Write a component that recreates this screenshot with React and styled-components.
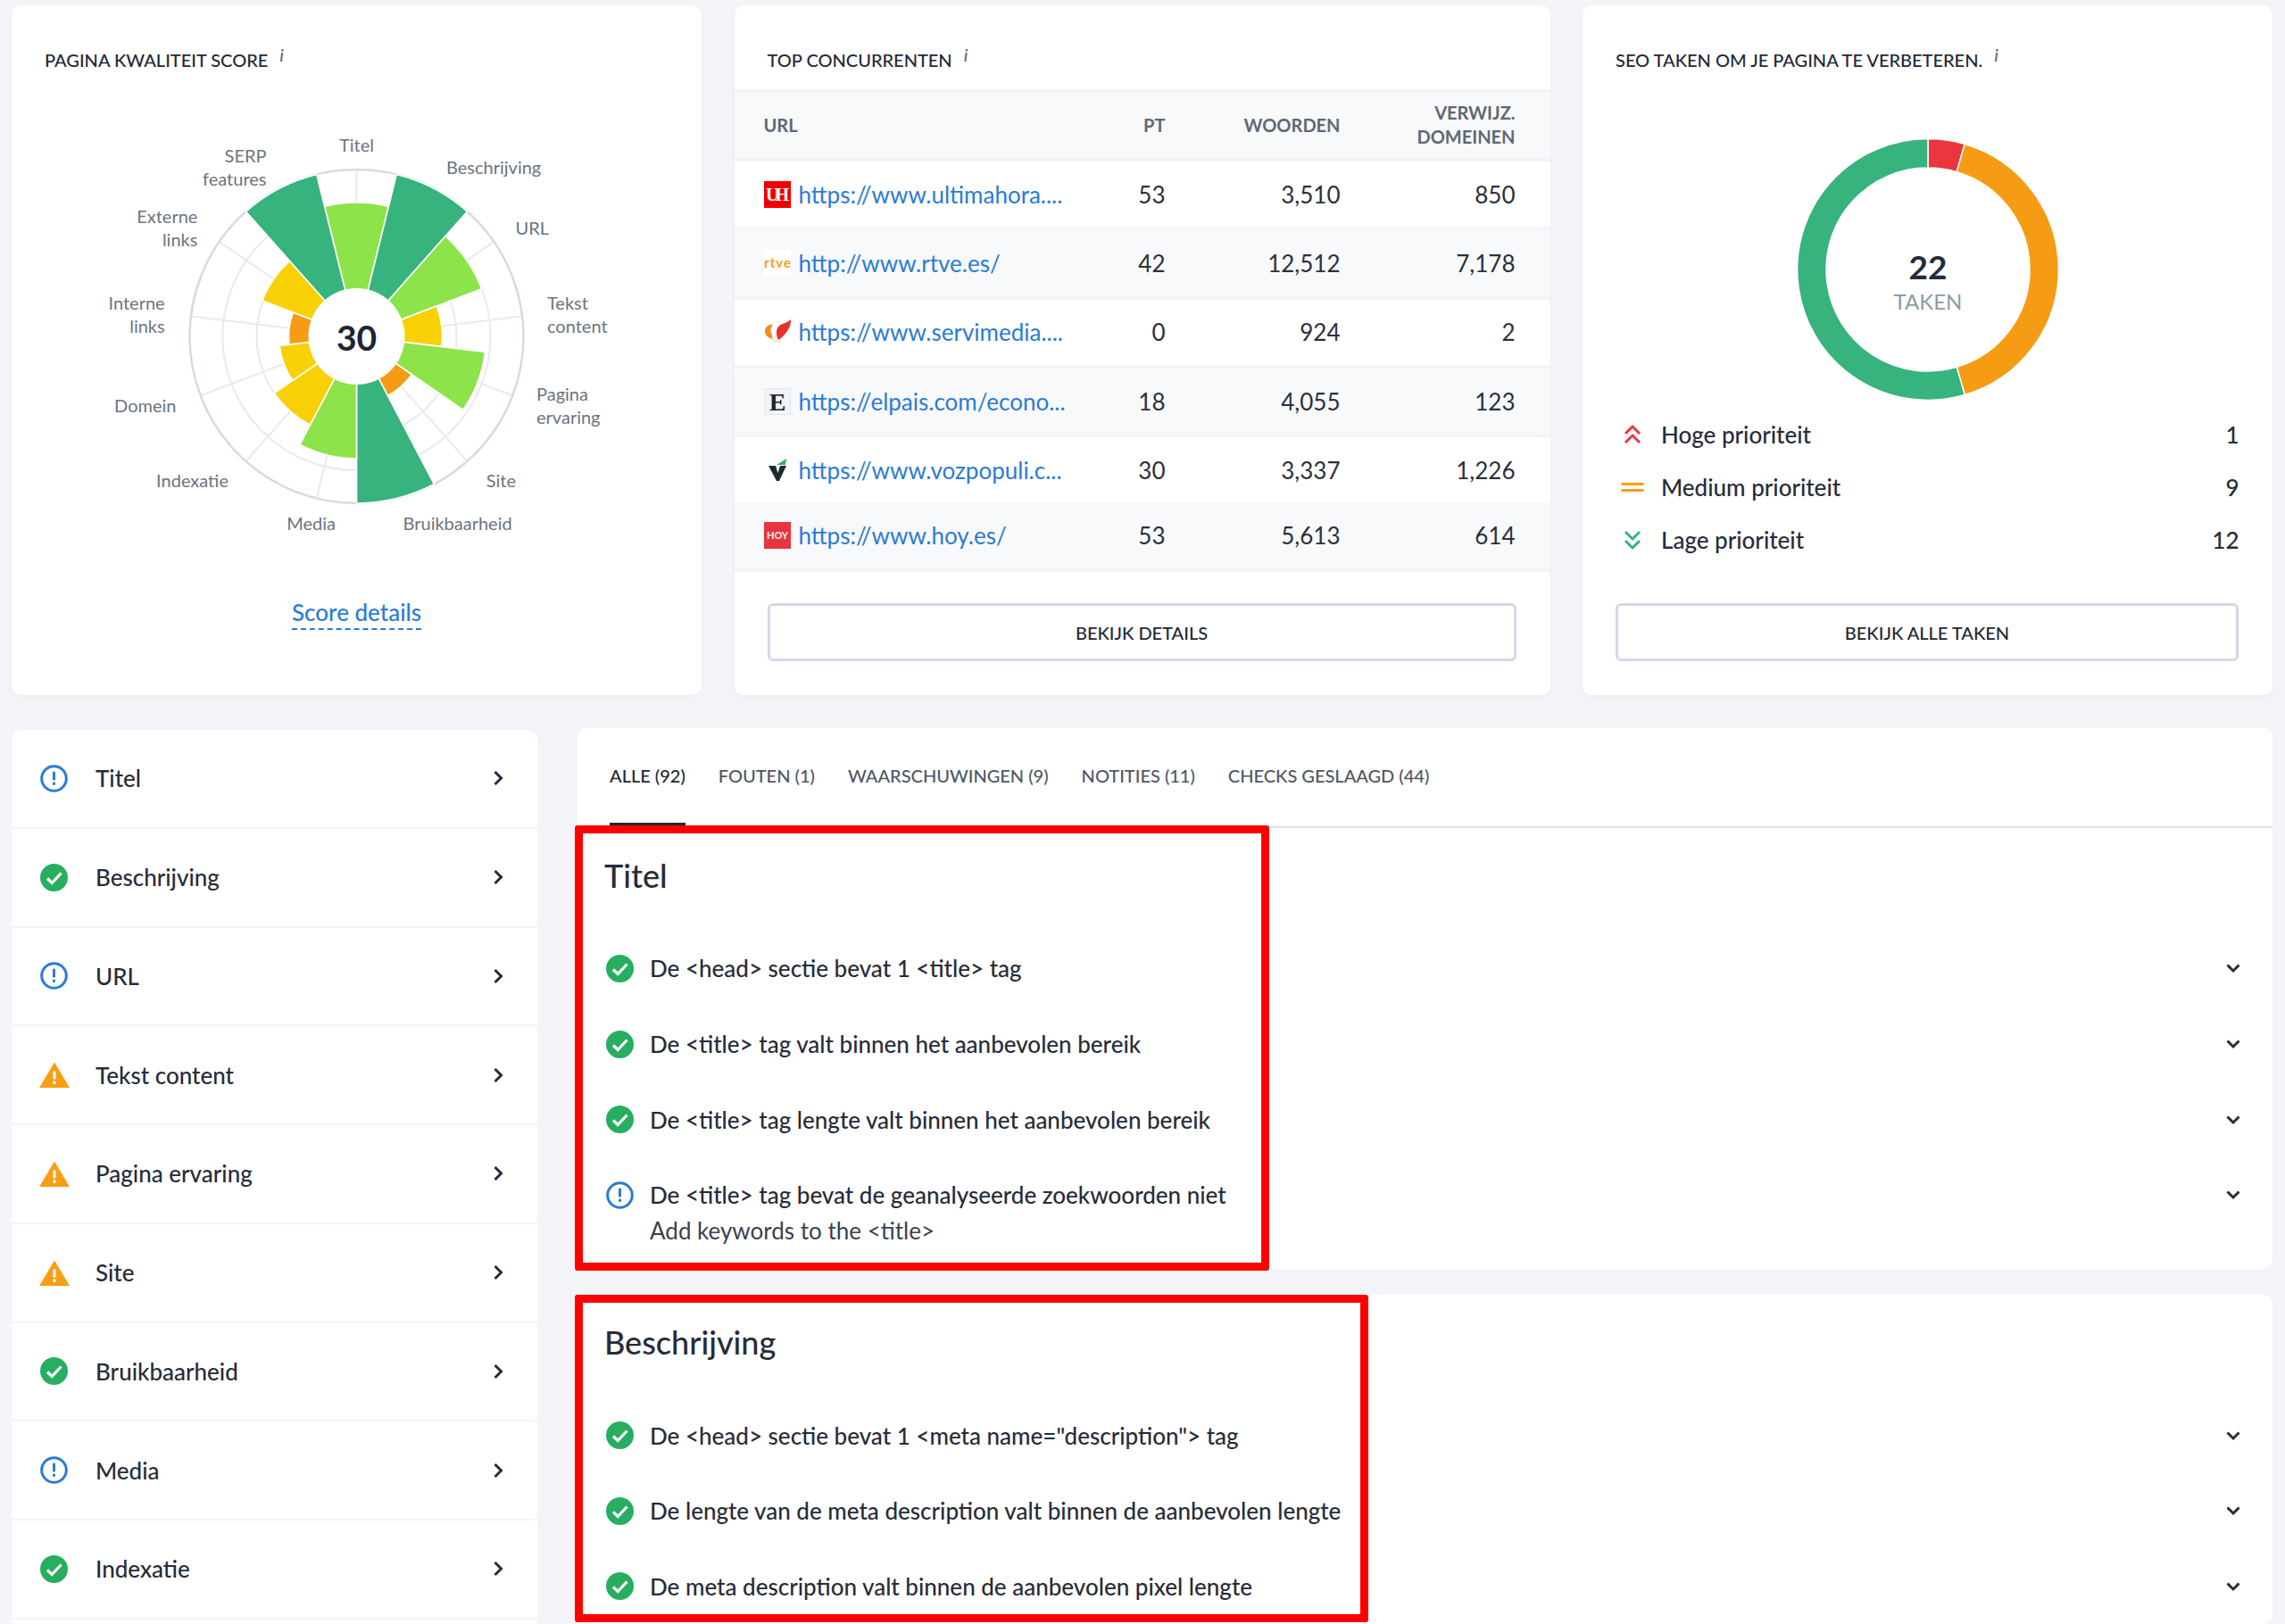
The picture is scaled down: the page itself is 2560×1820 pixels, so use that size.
import React from "react";
import styled, { createGlobalStyle } from "styled-components";

const GREEN = "#37b37e";
const LIME = "#8ce34a";
const YELLOW = "#f7d106";
const ORANGE = "#f69c14";
const RED = "#e9363f";
const BLUE = "#2b7bd6";
const OK = "#27ae60";

const competitors = [
  { icon: "uh", url: "https://www.ultimahora....", pt: "53", words: "3,510", refs: "850" },
  { icon: "rtve", url: "http://www.rtve.es/", pt: "42", words: "12,512", refs: "7,178" },
  { icon: "servi", url: "https://www.servimedia....", pt: "0", words: "924", refs: "2" },
  { icon: "elpais", url: "https://elpais.com/econo...", pt: "18", words: "4,055", refs: "123" },
  { icon: "voz", url: "https://www.vozpopuli.c...", pt: "30", words: "3,337", refs: "1,226" },
  { icon: "hoy", url: "https://www.hoy.es/", pt: "53", words: "5,613", refs: "614" },
];

const categories = [
  ["info", "Titel"],
  ["ok", "Beschrijving"],
  ["info", "URL"],
  ["warn", "Tekst content"],
  ["warn", "Pagina ervaring"],
  ["warn", "Site"],
  ["ok", "Bruikbaarheid"],
  ["info", "Media"],
  ["ok", "Indexatie"],
  ["ok", "Domein"],
];

const tabs = ["ALLE (92)", "FOUTEN (1)", "WAARSCHUWINGEN (9)", "NOTITIES (11)", "CHECKS GESLAAGD (44)"];

// polar chart values: outer radius + colour, clockwise from the top
const sectors = [
  [150, LIME],
  [187, GREEN],
  [150, LIME],
  [96, YELLOW],
  [145, LIME],
  [75, ORANGE],
  [187, GREEN],
  [137, LIME],
  [112, YELLOW],
  [87, YELLOW],
  [76, ORANGE],
  [113, YELLOW],
  [187, GREEN],
];

const CX = 386.5;
const CY = 241;

// x and y are taken from the card corner, y from the top of the svg
const labels = [
  { x: 386.5, y: 26, anchor: "middle", lines: ["Titel"] },
  { x: 487, y: 51, anchor: "start", lines: ["Beschrijving"] },
  { x: 564.5, y: 119, anchor: "start", lines: ["URL"] },
  { x: 600, y: 203, anchor: "start", lines: ["Tekst", "content"] },
  { x: 588, y: 305, anchor: "start", lines: ["Pagina", "ervaring"] },
  { x: 565, y: 402, anchor: "end", lines: ["Site"] },
  { x: 438.5, y: 450, anchor: "start", lines: ["Bruikbaarheid"] },
  { x: 363, y: 450, anchor: "end", lines: ["Media"] },
  { x: 243, y: 402, anchor: "end", lines: ["Indexatie"] },
  { x: 184.5, y: 318, anchor: "end", lines: ["Domein"] },
  { x: 171.7, y: 203, anchor: "end", lines: ["Interne", "links"] },
  { x: 208.4, y: 106, anchor: "end", lines: ["Externe", "links"] },
  { x: 285.5, y: 38, anchor: "end", lines: ["SERP", "features"] },
];

function point(r, deg, cx = CX, cy = CY) {
  const a = ((deg - 90) * Math.PI) / 180;
  return [cx + r * Math.cos(a), cy + r * Math.sin(a)];
}

function sectorPath(r, from, to) {
  const [x1, y1] = point(r, from);
  const [x2, y2] = point(r, to);
  return `M${CX} ${CY} L${x1} ${y1} A${r} ${r} 0 0 1 ${x2} ${y2} Z`;
}

function ringPath(from, to) {
  const c = 150;
  const [x1, y1] = point(146.4, from, c, c);
  const [x2, y2] = point(146.4, to, c, c);
  const [x3, y3] = point(114, to, c, c);
  const [x4, y4] = point(114, from, c, c);
  const big = to - from > 180 ? 1 : 0;
  return `M${x1} ${y1} A146.4 146.4 0 ${big} 1 ${x2} ${y2} L${x3} ${y3} A114 114 0 ${big} 0 ${x4} ${y4} Z`;
}

function PolarChart() {
  const step = 360 / sectors.length;
  return (
    <ChartSvg viewBox="0 0 773 500">
      <circle cx={CX} cy={CY} r="112" fill="none" stroke="#e8eaf0" strokeWidth="2" />
      <circle cx={CX} cy={CY} r="150" fill="none" stroke="#e8eaf0" strokeWidth="2" />
      {sectors.map((_, i) => {
        const [x, y] = point(186, i * step);
        return <line key={i} x1={CX} y1={CY} x2={x} y2={y} stroke="#e8eaf0" strokeWidth="2" />;
      })}
      <circle cx={CX} cy={CY} r="187" fill="none" stroke="#d6dae6" strokeWidth="2.5" />
      {sectors.map(([r, color], i) => (
        <path
          key={i}
          d={sectorPath(r, i * step - step / 2, i * step + step / 2)}
          fill={color}
          stroke="#fff"
          strokeWidth="1.6"
        />
      ))}
      <circle cx={CX} cy={CY} r="54" fill="#fff" />
      <ChartScore x={CX} y={CY + 1}>
        30
      </ChartScore>
      {labels.map((l) => (
        <ChartLabel key={l.lines[0]} x={l.x} y={l.y} textAnchor={l.anchor}>
          {l.lines.map((line, i) => (
            <tspan key={line} x={l.x} dy={i ? 26 : 0}>
              {line}
            </tspan>
          ))}
        </ChartLabel>
      ))}
    </ChartSvg>
  );
}

function Donut() {
  const seg = 360 / 22;
  return (
    <DonutSvg viewBox="0 0 300 300">
      <path d={ringPath(0, seg)} fill={RED} stroke="#fff" strokeWidth="1.5" />
      <path d={ringPath(seg, seg * 10)} fill={ORANGE} stroke="#fff" strokeWidth="1.5" />
      <path d={ringPath(seg * 10, 360)} fill={GREEN} stroke="#fff" strokeWidth="1.5" />
      <DonutCount x="150" y="146">
        22
      </DonutCount>
      <DonutCaption x="150" y="185">
        TAKEN
      </DonutCaption>
    </DonutSvg>
  );
}

function StatusIcon({ type }) {
  if (type === "ok") {
    return (
      <IconSvg viewBox="0 0 31 31">
        <circle cx="15.5" cy="15.5" r="15.5" fill={OK} />
        <path d="M8 16.5 L13.2 21.5 L23.5 10.5" fill="none" stroke="#fff" strokeWidth="3.2" />
      </IconSvg>
    );
  }
  if (type === "warn") {
    return (
      <IconSvg viewBox="0 0 34 31" $wide>
        <path d="M17 1.5 L34 30 H0 Z" fill="#f99e14" />
        <rect x="15.4" y="11.5" width="3.2" height="9" rx="1" fill="#fff" />
        <rect x="15.4" y="22.5" width="3.2" height="3.4" rx="1" fill="#fff" />
      </IconSvg>
    );
  }
  return (
    <IconSvg viewBox="0 0 31 31">
      <circle cx="15.5" cy="15.5" r="13.8" fill="none" stroke={BLUE} strokeWidth="3" />
      <rect x="14" y="7.5" width="3" height="10" rx="1.2" fill={BLUE} />
      <rect x="14" y="19.6" width="3" height="3.4" rx="1.2" fill={BLUE} />
    </IconSvg>
  );
}

function PriorityIcon({ level }) {
  if (level === "high") {
    return (
      <PrioritySvg viewBox="0 0 26 24" stroke={RED}>
        <path d="M5 11 L13 3 L21 11" />
        <path d="M5 21 L13 13 L21 21" />
      </PrioritySvg>
    );
  }
  if (level === "low") {
    return (
      <PrioritySvg viewBox="0 0 26 24" stroke={GREEN}>
        <path d="M5 3 L13 11 L21 3" />
        <path d="M5 13 L13 21 L21 13" />
      </PrioritySvg>
    );
  }
  return (
    <PrioritySvg viewBox="0 0 26 24" stroke={ORANGE}>
      <path d="M0.5 8.5 H25.5" />
      <path d="M0.5 15.5 H25.5" />
    </PrioritySvg>
  );
}

function Favicon({ name }) {
  if (name === "uh") {
    return (
      <FavSvg viewBox="0 0 30 30">
        <rect width="30" height="30" fill="#f00000" />
        <FavText x="15" y="22" fill="#fff" fontSize="20" fontFamily="Liberation Serif" fontWeight="700" textLength="26">
          UH
        </FavText>
      </FavSvg>
    );
  }
  if (name === "rtve") {
    return (
      <FavSvg viewBox="0 0 30 30">
        <rect width="30" height="30" fill="#fff" />
        <FavText x="15" y="20" fill="#f69c14" fontSize="15" fontWeight="700" textLength="30">
          rtve
        </FavText>
      </FavSvg>
    );
  }
  if (name === "servi") {
    return (
      <FavSvg viewBox="0 0 30 30">
        <path d="M1 14 C1 9 6 6 10 7 C7 10 7 14 8.5 17 L10 23 C5 22 1 19 1 14Z" fill="#f58a1f" />
        <path d="M30 1 C31 8 25 18 16 24 C13 18 13 12 17 8 C21 5 26 5 30 1Z" fill="#e8312f" />
        <path d="M9 21 C11 26 15 27 19 24" fill="none" stroke="#fbd7b0" strokeWidth="1.5" />
      </FavSvg>
    );
  }
  if (name === "elpais") {
    return (
      <FavSvg viewBox="0 0 30 30">
        <rect x="0.5" y="0.5" width="29" height="29" fill="#f3f4f6" stroke="#e4e6ea" />
        <FavText x="15" y="25" fill="#20252b" fontSize="28" fontFamily="Liberation Serif" fontWeight="700">
          E
        </FavText>
      </FavSvg>
    );
  }
  if (name === "voz") {
    return (
      <FavSvg viewBox="0 0 30 30">
        <path d="M5 10 H13 L15.5 18 L18 10 H25 L17 27 H14 Z" fill="#1f2a2e" />
        <path d="M14 9 L25 2 L24 9 Z" fill="#2fb457" />
      </FavSvg>
    );
  }
  return (
    <FavSvg viewBox="0 0 30 30">
      <rect width="30" height="30" fill="#e7343f" />
      <FavText x="15" y="19" fill="#fbe3e3" fontSize="11" fontWeight="900">
        HOY
      </FavText>
    </FavSvg>
  );
}

function Chevron({ down }) {
  return (
    <ChevronSvg viewBox="0 0 16 16">
      <path d={down ? "M1.5 4.5 L8 11 L14.5 4.5" : "M4.5 1 L11.5 8 L4.5 15"} />
    </ChevronSvg>
  );
}

function CheckRow({ type, text, hint }) {
  return (
    <Row>
      <StatusIcon type={type} />
      <RowBody>
        <RowText>{text}</RowText>
        {hint && <RowHint>{hint}</RowHint>}
      </RowBody>
      <Chevron down />
    </Row>
  );
}

export default function App() {
  return (
    <>
      <GlobalStyle />
      <Page>
        <TopRow>
          <Card>
            <CardTitle>
              PAGINA KWALITEIT SCORE<Info>i</Info>
            </CardTitle>
            <PolarChart />
            <ScoreLink>Score details</ScoreLink>
          </Card>

          <WideCard>
            <CardTitle $flush>
              TOP CONCURRENTEN<Info>i</Info>
            </CardTitle>
            <TableHead>
              <div>URL</div>
              <Num>PT</Num>
              <Num>WOORDEN</Num>
              <Num>
                VERWIJZ.
                <br />
                DOMEINEN
              </Num>
            </TableHead>
            {competitors.map((c, i) => (
              <TableRow key={c.url} $alt={i % 2 === 1}>
                <UrlCell>
                  <Favicon name={c.icon} />
                  <UrlLink>{c.url}</UrlLink>
                </UrlCell>
                <Num>{c.pt}</Num>
                <Num>{c.words}</Num>
                <Num>{c.refs}</Num>
              </TableRow>
            ))}
            <OutlineButton>BEKIJK DETAILS</OutlineButton>
          </WideCard>

          <Card>
            <CardTitle>
              SEO TAKEN OM JE PAGINA TE VERBETEREN.<Info>i</Info>
            </CardTitle>
            <Donut />
            <Legend>
              <LegendRow>
                <PriorityIcon level="high" />
                <span>Hoge prioriteit</span>
                <LegendCount>1</LegendCount>
              </LegendRow>
              <LegendRow>
                <PriorityIcon level="medium" />
                <span>Medium prioriteit</span>
                <LegendCount>9</LegendCount>
              </LegendRow>
              <LegendRow>
                <PriorityIcon level="low" />
                <span>Lage prioriteit</span>
                <LegendCount>12</LegendCount>
              </LegendRow>
            </Legend>
            <OutlineButton>BEKIJK ALLE TAKEN</OutlineButton>
          </Card>
        </TopRow>

        <BottomRow>
          <Sidebar>
            {categories.map(([type, name]) => (
              <SideRow key={name}>
                <StatusIcon type={type} />
                <SideName>{name}</SideName>
                <Chevron />
              </SideRow>
            ))}
          </Sidebar>

          <Main>
            <Panel>
              <TabBar>
                {tabs.map((t, i) => (
                  <Tab key={t} $active={i === 0}>
                    {t}
                  </Tab>
                ))}
              </TabBar>
              <Section>
                <SectionTitle>Titel</SectionTitle>
                <CheckRow type="ok" text="De <head> sectie bevat 1 <title> tag" />
                <CheckRow type="ok" text="De <title> tag valt binnen het aanbevolen bereik" />
                <CheckRow type="ok" text="De <title> tag lengte valt binnen het aanbevolen bereik" />
                <CheckRow
                  type="info"
                  text="De <title> tag bevat de geanalyseerde zoekwoorden niet"
                  hint="Add keywords to the <title>"
                />
              </Section>
              <Highlight $top={109} $width={778} $height={499} />
            </Panel>

            <Panel>
              <Section>
                <SectionTitle>Beschrijving</SectionTitle>
                <CheckRow type="ok" text='De <head> sectie bevat 1 <meta name="description"> tag' />
                <CheckRow type="ok" text="De lengte van de meta description valt binnen de aanbevolen lengte" />
                <CheckRow type="ok" text="De meta description valt binnen de aanbevolen pixel lengte" />
              </Section>
              <Highlight $top={0} $width={889} $height={367} />
            </Panel>
          </Main>
        </BottomRow>
      </Page>
    </>
  );
}

const GlobalStyle = createGlobalStyle`
  html, body {
    margin: 0;
    background: #f2f4f8;
  }
  body {
    font-family: "Lato", "Liberation Sans", sans-serif;
    color: #272c3a;
  }
  * {
    box-sizing: border-box;
  }
`;

const Page = styled.div`
  height: 1820px;
  overflow: hidden;
  padding: 6px 14px 0 13px;
`;

const TopRow = styled.div`
  display: flex;
  justify-content: space-between;
  height: 773px;
`;

const Card = styled.section`
  width: 773px;
  display: flex;
  flex-direction: column;
  padding-bottom: 38px;
  background: #fff;
  border-radius: 10px;
  box-shadow: 0 1px 4px rgba(40, 50, 80, 0.04);
`;

const WideCard = styled(Card)`
  width: 914px;
`;

const CardTitle = styled.h2`
  margin: 40px 37px ${({ $flush }) => ($flush ? "18px" : "0")};
  font-size: 20px;
  line-height: 30px;
  font-weight: 500;
  color: #232836;
  white-space: nowrap;
`;

const Info = styled.i`
  margin-left: 13px;
  font-size: 20px;
  color: #5f6875;
  vertical-align: 6px;
`;

const ChartSvg = styled.svg`
  display: block;
  width: 773px;
  height: 500px;
  margin-top: 54px;
`;

const ChartLabel = styled.text`
  font-size: 20px;
  fill: #6d7480;
  dominant-baseline: central;
`;

const ChartScore = styled.text`
  font-size: 39px;
  font-weight: 700;
  fill: #1f2433;
  text-anchor: middle;
  dominant-baseline: central;
`;

const ScoreLink = styled.a`
  align-self: center;
  margin-top: 32px;
  font-size: 26px;
  line-height: 36px;
  font-weight: 500;
  color: ${BLUE};
  border-bottom: 2px dashed ${BLUE};
`;

const tableColumns = `
  display: grid;
  grid-template-columns: 1fr 76px 196px 196px;
  align-items: center;
  padding: 0 39px 0 33px;
`;

const TableHead = styled.div`
  ${tableColumns}
  height: 81px;
  font-size: 20px;
  line-height: 27px;
  font-weight: 700;
  color: #5f6875;
  background: #f8f9fb;
  border-top: 3px solid #f2f4f8;
  border-bottom: 4px solid #f2f4f8;
`;

const TableRow = styled.div`
  ${tableColumns}
  height: 77.3px;
  font-size: 26px;
  color: #2b303c;
  background: ${({ $alt }) => ($alt ? "#f8f9fb" : "#fff")};
  border-bottom: 4px solid #f2f4f8;

  &:nth-last-of-type(2) {
    height: 73.3px;
    border-bottom: 0;
  }
`;

const Num = styled.div`
  text-align: right;
`;

const UrlCell = styled.div`
  display: flex;
  align-items: center;
  gap: 9px;
`;

const UrlLink = styled.a`
  color: ${BLUE};
  white-space: nowrap;
`;

const FavSvg = styled.svg`
  flex: none;
  width: 30px;
  height: 30px;
`;

const FavText = styled.text`
  text-anchor: middle;
`;

const OutlineButton = styled.button`
  flex: none;
  height: 65px;
  margin: auto 38px 0 37px;
  background: #fff;
  border: 3px solid #d5d9e6;
  border-radius: 6px;
  font-family: inherit;
  font-size: 20px;
  font-weight: 500;
  color: #232836;
`;

const DonutSvg = styled.svg`
  display: block;
  flex: none;
  width: 300px;
  height: 300px;
  margin: 70px auto 0;
`;

const DonutCount = styled.text`
  font-size: 37px;
  font-weight: 700;
  fill: #262c3b;
  text-anchor: middle;
  dominant-baseline: central;
`;

const DonutCaption = styled.text`
  font-size: 24px;
  fill: #8c9ca3;
  text-anchor: middle;
  dominant-baseline: central;
`;

const Legend = styled.div`
  margin: 6px 37.5px 0 37px;
`;

const LegendRow = styled.div`
  display: flex;
  align-items: center;
  height: 58.75px;
  font-size: 26px;
  font-weight: 500;
  color: #272c3a;
`;

const LegendCount = styled.span`
  margin-left: auto;
`;

const PrioritySvg = styled.svg`
  flex: none;
  width: 26px;
  height: 24px;
  margin: 0 19px 0 6px;
  fill: none;
  stroke-width: 3;
`;

const BottomRow = styled.div`
  display: grid;
  grid-template-columns: 589px 1899px;
  column-gap: 45px;
  margin-top: 37px;
`;

const Sidebar = styled.nav`
  margin-top: 2px;
  background: #fff;
  border-radius: 10px 10px 0 0;
`;

const SideRow = styled.div`
  display: flex;
  align-items: center;
  height: 110.75px;
  padding: 0 36px 0 32px;
  border-bottom: 2px solid #f2f4f8;
`;

const SideName = styled.span`
  flex: 1;
  margin-left: 31px;
  font-size: 26px;
  font-weight: 500;
  color: #272c3a;
`;

const IconSvg = styled.svg`
  flex: none;
  width: ${({ $wide }) => ($wide ? "34px" : "31px")};
  height: 31px;
  margin: ${({ $wide }) => ($wide ? "0 -1.5px" : "0")};
`;

const ChevronSvg = styled.svg`
  flex: none;
  width: 16px;
  height: 16px;
  fill: none;
  stroke: #272c3a;
  stroke-width: 3;
`;

const Main = styled.main`
  display: flex;
  flex-direction: column;
  gap: 29.5px;
`;

const Panel = styled.section`
  position: relative;
  background: #fff;
  border-radius: 10px;
`;

const TabBar = styled.div`
  display: flex;
  gap: 37px;
  height: 112px;
  padding: 0 36px;
  border-bottom: 2px solid #dfe2ea;
`;

const Tab = styled.div`
  height: 110px;
  padding-top: 38px;
  font-size: 20px;
  line-height: 30px;
  font-weight: 500;
  white-space: nowrap;
  color: ${({ $active }) => ($active ? "#232836" : "#4f5766")};
  border-bottom: 4px solid ${({ $active }) => ($active ? "#232836" : "transparent")};
`;

const Section = styled.div`
  padding: 31px 36px 0 30px;
`;

const SectionTitle = styled.h3`
  margin: 0 0 40px;
  font-size: 36px;
  line-height: 44px;
  font-weight: 500;
  color: #272c3a;
`;

const Row = styled.div`
  display: flex;
  align-items: flex-start;
  padding: 22.35px 0 22.35px 2px;

  & > svg:first-child {
    margin-top: 4.5px;
  }
  & > svg:last-child {
    margin-top: 12px;
  }
`;

const RowBody = styled.div`
  flex: 1;
  margin-left: 18px;
`;

const RowText = styled.div`
  font-size: 26px;
  line-height: 40px;
  font-weight: 500;
  color: #272c3a;
`;

const RowHint = styled.div`
  font-size: 26px;
  line-height: 40px;
  color: #3b4150;
`;

// red annotation frame drawn on top of the screenshot content
const Highlight = styled.div`
  position: absolute;
  left: -3px;
  top: ${({ $top }) => $top}px;
  width: ${({ $width }) => $width}px;
  height: ${({ $height }) => $height}px;
  border: 9px solid #ff0000;
  border-radius: 3px;
  pointer-events: none;
`;
